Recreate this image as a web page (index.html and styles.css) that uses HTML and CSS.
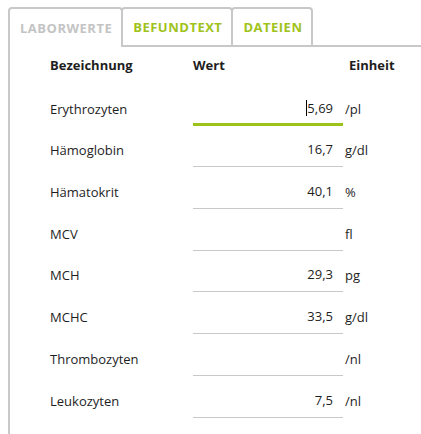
FILE: index.html
```html
<!DOCTYPE html>
<html lang="de">
<head>
    <meta charset="UTF-8">
    <meta name="viewport" content="width=device-width, initial-scale=1.0">
    <title>Laborwerte</title>
    <link rel="stylesheet" href="styles.css">
</head>
<body>
    <div class="tabs">
        <ul class="tab-list">
            <li class="tab active">Laborwerte</li>
            <li class="tab">Befundtext</li>
            <li class="tab">Dateien</li>
        </ul>
        <div class="panel">
            <div class="row head">
                <div class="cell">Bezeichnung</div>
                <div class="cell">Wert</div>
                <div class="cell unit">Einheit</div>
            </div>
            <div class="row">
                <div class="cell">Erythrozyten</div>
                <div class="cell value focused"><span class="caret"></span>5,69</div>
                <div class="cell unit">/pl</div>
            </div>
            <div class="row">
                <div class="cell">Hämoglobin</div>
                <div class="cell value">16,7</div>
                <div class="cell unit">g/dl</div>
            </div>
            <div class="row">
                <div class="cell">Hämatokrit</div>
                <div class="cell value">40,1</div>
                <div class="cell unit">%</div>
            </div>
            <div class="row">
                <div class="cell">MCV</div>
                <div class="cell value"></div>
                <div class="cell unit">fl</div>
            </div>
            <div class="row">
                <div class="cell">MCH</div>
                <div class="cell value">29,3</div>
                <div class="cell unit">pg</div>
            </div>
            <div class="row">
                <div class="cell">MCHC</div>
                <div class="cell value">33,5</div>
                <div class="cell unit">g/dl</div>
            </div>
            <div class="row">
                <div class="cell">Thrombozyten</div>
                <div class="cell value"></div>
                <div class="cell unit">/nl</div>
            </div>
            <div class="row">
                <div class="cell">Leukozyten</div>
                <div class="cell value">7,5</div>
                <div class="cell unit">/nl</div>
            </div>
        </div>
    </div>
</body>
</html>
```

FILE: styles.css
```css
body {
    margin: 0;
    background-color: #fff;
    font-family: "Open Sans", "Noto Sans", sans-serif;
    color: #1e1e1e;
    overflow: hidden;
}
.tabs {
    padding: 7px 0 0 8px;
}
.tab-list {
    display: flex;
    margin: 0;
    padding: 0;
    list-style: none;
}
.tab {
    height: 36px;
    padding: 0 9px 0 10px;
    display: flex;
    align-items: center;
    border: 2px solid #c8c8c8;
    border-bottom: none;
    border-radius: 4px 4px 0 0;
    font-size: 13px;
    font-weight: bold;
    letter-spacing: 0.5px;
    text-transform: uppercase;
    color: #9fc31c;
    background-color: #fff;
}
.tab + .tab {
    margin-left: -2px;
}
.tab.active {
    color: #c4c4c4;
    height: 38px;
    margin-bottom: -2px;
    position: relative; /* über die Linie des Panels legen */
    z-index: 1;
}
.panel {
    border-top: 2px solid #c8c8c8;
    border-left: 2px solid #c8c8c8;
    padding-left: 40px;
    height: 400px;
}
.row {
    display: grid;
    grid-template-columns: 143px 150px 1fr;
    height: 41.7px;
    font-size: 13px;
}
.row.head {
    height: 37px;
    font-weight: bold;
}
.row.head .cell {
    border: none;
    padding-bottom: 10px;
}
.row.head .unit {
    padding-left: 6px;
}
.cell {
    display: flex;
    align-items: flex-end;
    line-height: 18px;
    padding-bottom: 8px;
    box-sizing: border-box;
}
.value {
    justify-content: flex-end;
    padding-right: 10px;
    border-bottom: 1px solid #c8c8c8;
}
.value.focused {
    border-bottom: 3px solid #9dc21a;
    padding-bottom: 6px;
}
.caret {
    display: inline-block;
    width: 1px;
    height: 16px;
    margin-bottom: 1px;
    background-color: #000;
}
.unit {
    padding-left: 2px;
}
```
